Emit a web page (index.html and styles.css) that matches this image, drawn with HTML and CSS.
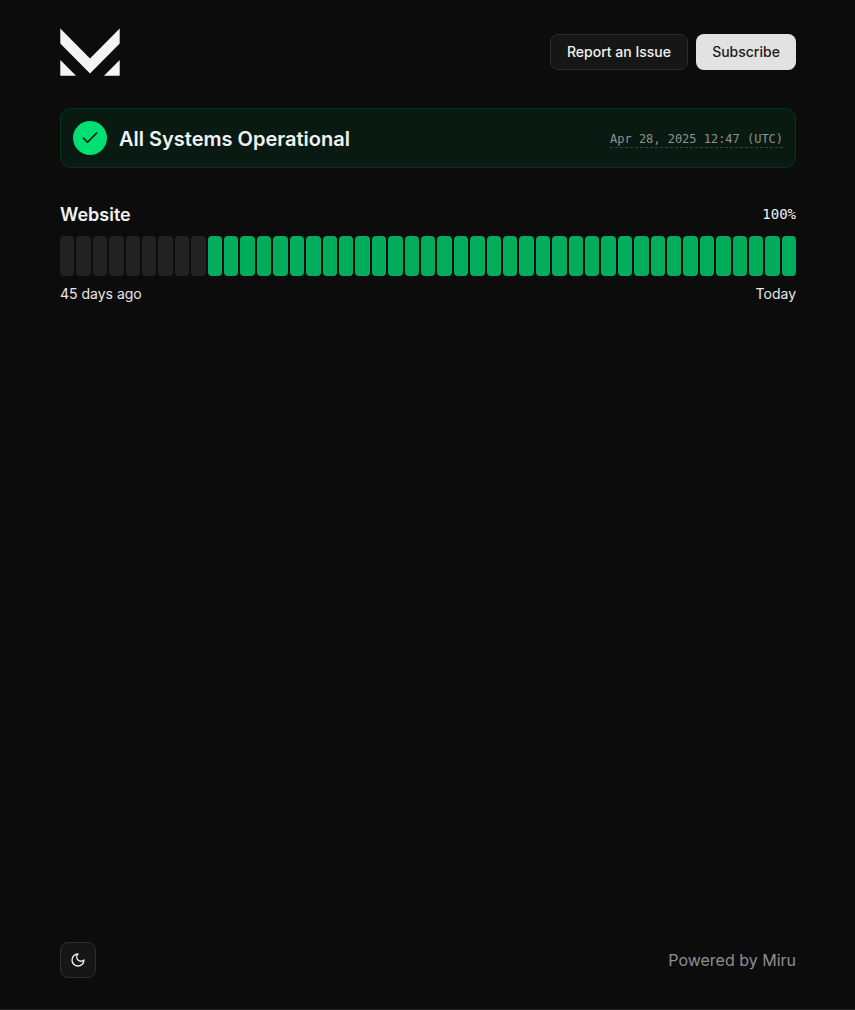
FILE: index.html
```html
<!DOCTYPE html>
<html lang="en">
<head>
<meta charset="utf-8">
<title>Status</title>
<link rel="stylesheet" href="styles.css">
</head>
<body>
<div class="page">
  <header class="header">
    <svg class="logo" viewBox="0 0 60 48" role="img" aria-label="Miru">
      <path d="M.3 .5 30 30.500 59.700 .5V15.500L30 45.500 .3 15.500ZM.3 32 16 47.700H.3ZM59.700 32V47.700H44Z"/>
    </svg>
    <nav class="actions">
      <button class="btn btn-outline">Report an Issue</button>
      <button class="btn btn-solid">Subscribe</button>
    </nav>
  </header>
  <main class="main">
    <section class="banner">
      <span class="badge"><svg viewBox="0 0 24 24"><path d="M20 6 9 17l-5-5"/></svg></span>
      <h1 class="title">All Systems Operational</h1>
      <time class="stamp">Apr 28, 2025 12:47 (UTC)</time>
    </section>
    <section class="monitor">
      <div class="row head"><h2 class="name">Website</h2><span class="uptime">100%</span></div>
      <div class="bars" id="bars"></div>
      <div class="row range"><span>45 days ago</span><span>Today</span></div>
    </section>
  </main>
  <footer class="footer">
    <button class="theme" aria-label="Toggle theme"><svg viewBox="0 0 24 24"><path d="M12 3a6 6 0 0 0 9 9 9 9 0 1 1-9-9Z"/></svg></button>
    <span class="powered">Powered by Miru</span>
  </footer>
</div>
<script src="bars.js"></script>
</body>
</html>
```
FILE: bars.js
```js
const bars = document.getElementById("bars");
for (let day = 0; day < 45; day++) {
  const bar = document.createElement("span");
  bar.className = day < 9 ? "bar" : "bar up";
  bars.appendChild(bar);
}
```
FILE: styles.css
```css
* { box-sizing: border-box; margin: 0; }
body { background: #0c0c0c; color: #f2f2f2; font-family: Inter, sans-serif; }
.page { display: flex; flex-direction: column; height: 1010px; padding: 28px 59px 31px 60px; border-bottom: 1px solid #222; }
.header { display: flex; justify-content: space-between; align-items: center; height: 48px; }
.logo { width: 60px; height: 48px; fill: #f4f4f4; }
.actions { display: flex; gap: 8px; }
.btn { height: 36px; padding: 0 16px; border: 1px solid #2e2e2e; border-radius: 8px; font: 500 14px/20px Inter, sans-serif; }
.btn-outline { background: #161616; color: #f2f2f2; }
.btn-solid { width: 100px; padding: 0; background: #e2e2e2; border: 0; color: #1c1c1c; }
.main { flex: 1; padding-top: 32px; }
.banner { display: flex; align-items: center; gap: 12px; height: 60px; padding: 12px; background: #091a12; border: 1px solid #04351f; border-radius: 10px; }
.badge { display: flex; align-items: center; justify-content: center; width: 34px; height: 34px; border-radius: 50%; background: #00df72; }
.badge svg { width: 20px; height: 20px; fill: none; stroke: #0c0c0c; stroke-width: 1.8; stroke-linecap: round; stroke-linejoin: round; }
.title { flex: 1; padding-top: 2px; font-size: 20px; line-height: 28px; font-weight: 600; }
.stamp { margin-top: 2px; font: 12px/16px "DejaVu Sans Mono", monospace; letter-spacing: -0.02px; color: #8e9290; border-bottom: 1px dashed #38453e; }
.monitor { padding-top: 33px; }
.row { display: flex; justify-content: space-between; align-items: center; }
.head { height: 28px; }
.name { font-size: 18px; line-height: 28px; font-weight: 600; }
.uptime { margin-bottom: 2px; font: 14px/20px "DejaVu Sans Mono", monospace; }
.bars { display: flex; gap: 2px; height: 40px; margin-top: 7px; }
.bar { flex: 1; border-radius: 4px; background: #222; }
.up { background: #00ad5b; }
.range { height: 20px; margin-top: 8px; font-size: 14px; line-height: 20px; color: #e8e8e8; }
.footer { display: flex; justify-content: space-between; align-items: center; height: 36px; }
.theme { display: flex; align-items: center; justify-content: center; width: 36px; height: 36px; padding: 0; background: #161616; border: 1px solid #2e2e2e; border-radius: 8px; }
.theme svg { width: 16px; height: 16px; fill: none; stroke: #f2f2f2; stroke-width: 2; stroke-linecap: round; stroke-linejoin: round; }
.powered { font-size: 16px; line-height: 24px; color: #8f8f8f; }
```
